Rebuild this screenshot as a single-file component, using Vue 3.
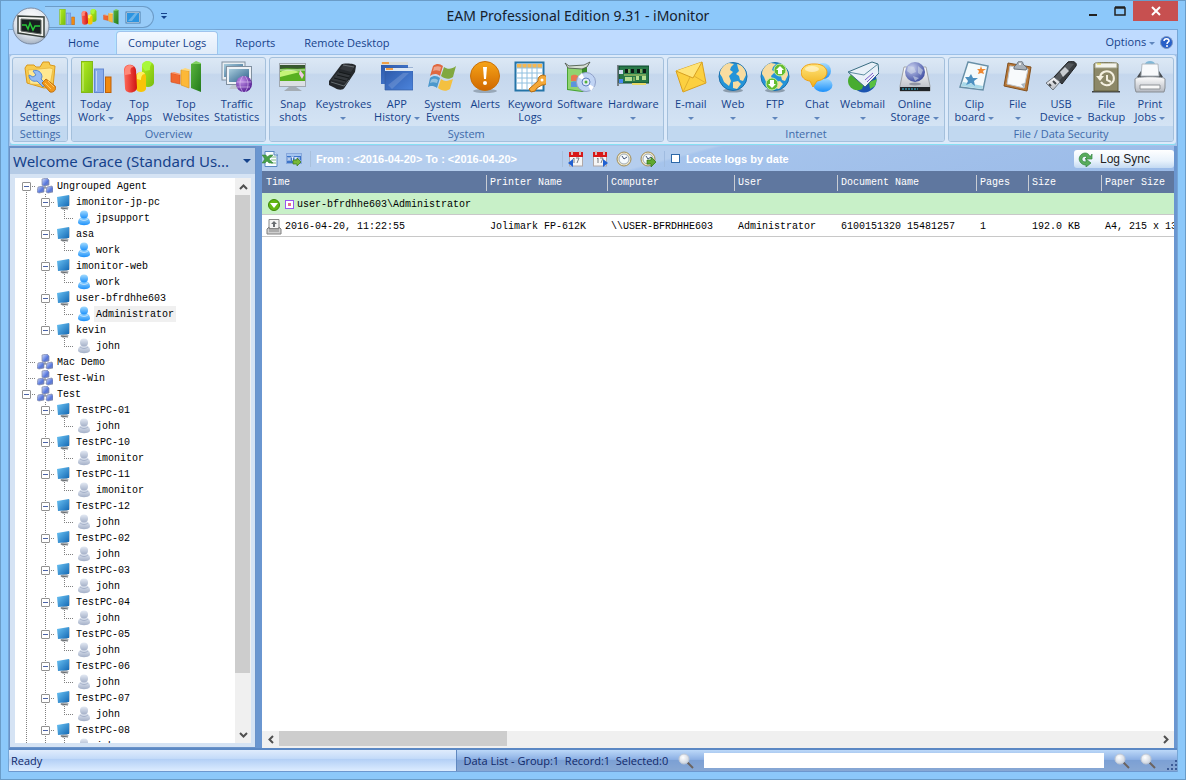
<template>
  <div class="window">
    <svg class="defs" aria-hidden="true">
      <defs>
        <linearGradient id="gGreen" x1="0" y1="0" x2="1" y2="1"><stop offset="0" stop-color="#b4ee1e" /><stop offset="1" stop-color="#78bc10" /></linearGradient>
        <linearGradient id="gLeaf" x1="0" y1="0" x2="1" y2="1"><stop offset="0" stop-color="#58b43c" /><stop offset="1" stop-color="#237a1c" /></linearGradient>
        <linearGradient id="gRed" x1="0" y1="0" x2="1" y2="0"><stop offset="0" stop-color="#ff6a5a" /><stop offset="1" stop-color="#d01212" /></linearGradient>
        <linearGradient id="gBlue" x1="0" y1="0" x2="1" y2="1"><stop offset="0" stop-color="#6cc4f4" /><stop offset="1" stop-color="#1468b4" /></linearGradient>
        <linearGradient id="gNavy" x1="0" y1="0" x2="1" y2="1"><stop offset="0" stop-color="#2c58a8" /><stop offset="1" stop-color="#4c84dc" /></linearGradient>
        <linearGradient id="gYellow" x1="0" y1="0" x2="0" y2="1"><stop offset="0" stop-color="#ffe680" /><stop offset="1" stop-color="#f0b018" /></linearGradient>
        <linearGradient id="gOrange" x1="0" y1="0" x2="0" y2="1"><stop offset="0" stop-color="#f6a418" /><stop offset="1" stop-color="#d06800" /></linearGradient>
        <linearGradient id="gSilver" x1="0" y1="0" x2="0" y2="1"><stop offset="0" stop-color="#ffffff" /><stop offset="1" stop-color="#b4b8c0" /></linearGradient>
        <linearGradient id="gScreen" x1="0" y1="0" x2="1" y2="1"><stop offset="0" stop-color="#a8ccdc" /><stop offset="1" stop-color="#285c88" /></linearGradient>
        <linearGradient id="gUser" x1="0" y1="0" x2="0" y2="1"><stop offset="0" stop-color="#a4dcff" /><stop offset="1" stop-color="#1c90fa" /></linearGradient>
        <linearGradient id="gUserOff" x1="0" y1="0" x2="0" y2="1"><stop offset="0" stop-color="#e4eaf4" /><stop offset="1" stop-color="#a4b0c8" /></linearGradient>
        <linearGradient id="gCube" x1="0" y1="0" x2="1" y2="1"><stop offset="0" stop-color="#dce4ff" /><stop offset=".6" stop-color="#5878dc" /><stop offset="1" stop-color="#7c88b8" /></linearGradient>
        <radialGradient id="gPurple" cx=".35" cy=".3" r=".8"><stop offset="0" stop-color="#c090e8" /><stop offset="1" stop-color="#4c148c" /></radialGradient>
        <radialGradient id="gGlobe" cx=".35" cy=".3" r=".8"><stop offset="0" stop-color="#c8d0f0" /><stop offset="1" stop-color="#34449c" /></radialGradient>
        <radialGradient id="gOrb" cx=".5" cy=".3" r=".8"><stop offset="0" stop-color="#ffffff" /><stop offset=".6" stop-color="#dce2ea" /><stop offset="1" stop-color="#8c9cb0" /></radialGradient>
        <radialGradient id="gLens" cx=".4" cy=".35" r=".7"><stop offset="0" stop-color="#ffffff" /><stop offset="1" stop-color="#c8d0dc" /></radialGradient>
      </defs>

      <symbol id="agent" viewBox="0 0 32 32">
        <path d="M1 7l2-3h7l2 2h4l3-5h6l1 3 5 1-2 21-9 1L3 22z" fill="#f8cc50" stroke="#d8981c" />
        <path d="M4 9l22-2 3 1-3 16-20-1z" fill="#ffe890" stroke="#e4b038" stroke-width=".7" />
        <path d="M9 10c4-2 9 1 9 6l-1 2 5 5-3 3-6-6c-4 1-8-1-8-6l4 2 3-2z" fill="#94bcf4" stroke="#5888d0" />
        <path d="M18 22l4-4 9 7c2 3-1 7-5 6z" fill="#f0981c" stroke="#c07010" />
        <path d="M21 22l6 6M24 20l6 6" stroke="#ffc860" fill="none" />
      </symbol>
      <symbol id="bars" viewBox="0 0 32 32">
        <rect x="1.500" y=".5" width="11" height="31" fill="url(#gGreen)" stroke="#84b818" />
        <rect x="14.500" y="8" width="9" height="23.500" fill="#88acec" stroke="#6488d0" />
        <rect x="25.500" y="16" width="5.500" height="15.500" fill="#f08a10" stroke="#c06008" />
        <path d="M3 2v28M16.500 10v20" stroke="#ffffff" stroke-opacity=".5" />
      </symbol>
      <symbol id="apps" viewBox="0 0 32 32">
        <path d="M19 5c0-6 11-6 12 0v17c-1 5-10 5-12 1z" fill="url(#gGreen)" />
        <path d="M19 5c0-5 6-6 9-4 2 2-2 3-1 8l-5 1z" fill="#a8f83c" />
        <path d="M13 15c0-5 9-5 10 0v13c-1 4-9 4-10 0z" fill="#f8c408" /><path d="M14 14c1-4 7-4 8-1-3 0-4 3-4 6l-4-1z" fill="#fff060" />
        <path d="M1 9c0-7 11-7 12 0l1 18c-1 6-12 6-12 0z" fill="url(#gRed)" /><path d="M2 8c1-5 7-5 9-2-4 0-4 3-3 7l-6 1z" fill="#ff8878" />
      </symbol>
      <symbol id="sites" viewBox="0 0 32 32">
        <path d="M1 12l9 2v9L1 21z" fill="#f06830" stroke="#d85020" stroke-width=".7" /><path d="M1 12l3-1 7 2-1 1z" fill="#ff9868" />
        <path d="M11 9l8 1v17l-8-3z" fill="#fcb838" stroke="#e09820" stroke-width=".7" /><path d="M11 9l4-2 6 2-2 1z" fill="#ffd878" />
        <path d="M21 3l10-1v29l-10-4z" fill="url(#gLeaf)" /><path d="M21 3l5-3 5 2v1z" fill="#80d060" />
      </symbol>
      <symbol id="traffic" viewBox="0 0 32 32">
        <rect x="1" y="1" width="23" height="18" fill="#e8eef2" stroke="#8090a0" /><rect x="3" y="3" width="19" height="13" fill="url(#gScreen)" />
        <path d="M8 28h14l-2-4h-9z" fill="#c0c8d0" />
        <rect x="5.500" y="5.500" width="25" height="18" fill="#eef2f6" stroke="#8090a0" /><rect x="8" y="8" width="20" height="13" fill="url(#gScreen)" />
        <circle cx="23" cy="23" r="8" fill="url(#gPurple)" />
        <path d="M16 21h14M16 26h13M22 15c-4 5-4 11 0 16M24 15c4 5 4 11 0 16" stroke="#e0c8f4" stroke-opacity=".6" fill="none" />
      </symbol>
      <symbol id="snap" viewBox="0 0 32 32">
        <path d="M7 30l5-4h7l6 4z" fill="#a4acb4" /><rect x="2.500" y="2.500" width="26" height="23" fill="#dce0e4" stroke="#a0a8b0" />
        <path d="M3 4h25v5H3z" fill="#385830" /><path d="M3 8c8-2 15 1 25-1v13H3z" fill="#58b020" /><path d="M3 11c8-4 13-2 20 0L3 16z" fill="#c4f478" />
        <path d="M3 8h25v2H3z" fill="#d8e8d0" fill-opacity=".5" /><path d="M23 9l4 5-2 4-3-5z" fill="#f0c8e0" />
      </symbol>
      <symbol id="keys" viewBox="0 0 32 32">
        <path d="M2 20L14 4c1-2 14-2 15 1l-1 6-10 15c-2 4-7 3-10 1l-6-3z" fill="#24282c" />
        <path d="M13 8l4-5 11 2-4 6zM4 19l7-8 12 3-5 8z" fill="#34383c" />
        <path d="M7 17l12 3M10 14l12 3M12 11l12 3" stroke="#14181a" fill="none" /><path d="M4 21l13 4 5-6" stroke="#646c70" fill="none" /><path d="M16 4l11 2" stroke="#686e72" fill="none" />
      </symbol>
      <symbol id="windows" viewBox="0 0 32 32">
        <path d="M0 2h27v21H0z" fill="url(#gNavy)" /><path d="M0 1h27v3H0z" fill="#d8dcd8" /><path d="M1 1h7v2H1z" fill="#f0a048" />
        <path d="M4 7h28v22H4z" fill="url(#gNavy)" stroke="#345ca0" stroke-width=".7" /><path d="M4 7h28v3H4z" fill="#dce8f4" /><path d="M5 7h7v2H5z" fill="#f0a048" />
        <path d="M7 24L22 12h6L11 28z" fill="#ffffff" fill-opacity=".15" />
      </symbol>
      <symbol id="flag" viewBox="0 0 32 32">
        <path d="M6 5c4-3 7-2 10 0l-3 10c-4-3-7-2-10 0z" fill="#e06840" /><path d="M17 6c4 3 8 2 12-1l-3 11c-4 3-8 2-12-1z" fill="#80a840" />
        <path d="M3 17c4-3 7-2 10 0l-3 10c-4-3-7-2-9-1z" fill="#4c98cc" /><path d="M14 18c4 3 7 2 12 0l-3 10c-4 3-8 2-12-1z" fill="#f4c040" />
        <path d="M7 6c3-1 5-1 7 0l-1 4c-3-1-5-1-7 0zM4 19c3-2 5-1 7 0l-1 3c-3-1-5-1-7 0z" fill="#ffffff" fill-opacity=".4" />
      </symbol>
      <symbol id="alert" viewBox="0 0 32 32">
        <ellipse cx="16" cy="30" rx="12" ry="2" fill="#98a8b8" /><circle cx="16" cy="15" r="14.500" fill="url(#gOrange)" stroke="#c87008" />
        <path d="M14 6h4l-1 12h-2z" fill="#fff" /><circle cx="16" cy="22" r="2" fill="#fff" />
      </symbol>
      <symbol id="keyword" viewBox="0 0 32 32">
        <rect x="1.500" y="1.500" width="28" height="28" fill="#fff" stroke="#2474a8" stroke-width="2" /><path d="M3 3h25v4H3z" fill="#f8b850" />
        <path d="M8 3v25M13 3v25M18 3v25M23 3v25M3 7h25M3 12h25M3 17h25M3 22h25" stroke="#90c0e0" fill="none" />
        <path d="M17 31l-2-3 9-8a5 5 0 1 1 4 4l-5 3-2 3z" fill="#f4a838" stroke="#b86c10" /><circle cx="28" cy="19" r="1.500" fill="#fff" />
      </symbol>
      <symbol id="software" viewBox="0 0 32 32">
        <path d="M3 5l20-1-1 26-4 1-15-2z" fill="#48a434" /><path d="M4 7l14 1v22L4 28z" fill="#90d470" /><path d="M18 8l5-4v24l-5 3z" fill="#388c28" />
        <path d="M1 2l4 3 15-1 6-3-3 5-5 2L4 7z" fill="#d8e0d4" stroke="#485048" stroke-width=".8" />
        <path d="M7 15c3-2 5-1 7 0v5H7z" fill="#e87850" /><path d="M7 21c3-1 4-1 6 0v5H7z" fill="#5c94dc" /><circle cx="22" cy="21" r="9.500" fill="#c0d4f4" stroke="#90a0c8" />
        <path d="M22 21l-8-5 4-4zM22 21l8 5-3 4z" fill="#fff" /><circle cx="22" cy="21" r="4" fill="#e0e8f8" stroke="#6080c0" /><circle cx="22" cy="21" r="1.500" fill="#50b038" />
      </symbol>
      <symbol id="hardware" viewBox="0 0 32 32">
        <path d="M1 4v21" stroke="#788088" stroke-width="2" /><path d="M2 5h30v17H2z" fill="#287848" stroke="#0c4830" /><path d="M15 22h14v2H15z" fill="#e8d868" />
        <path d="M8 8h3v4H8zM14 8h3v4h-3zM20 8h3v4h-3zM26 8h3v4h-3z" fill="#0c1814" /><path d="M8 16h7v4H8zM19 15h3v4h-3zM25 15h4v4h-4z" fill="#b4dc90" />
        <path d="M7 14h22M12 8v4M24 8v4M17 16v4" stroke="#c8d870" fill="none" /><path d="M2 9h4v4H2z" fill="#d0dcf0" /><path d="M2 18h4v4H2z" fill="#4888f0" />
      </symbol>
      <symbol id="mail" viewBox="0 0 32 32">
        <path d="M1 10L27 1l4 21L8 31z" fill="#fcd040" stroke="#d8a020" /><path d="M1 10l17 7L27 1" fill="#ffe478" stroke="#d8a020" /><path d="M8 31l7-15M31 22L19 15" stroke="#e0b030" fill="none" />
      </symbol>
      <symbol id="globe" viewBox="0 0 32 32">
        <ellipse cx="16" cy="29.500" rx="10" ry="2" fill="#8c9cac" /><circle cx="16" cy="15.500" r="14" fill="#2494d8" stroke="#1c70ac" />
        <path d="M3 13c0-6 5-10 9-11l5 1-3 3-1 3 3 2-4 4 2 5-2 5-5-4-2-5zM20 3c5 1 9 5 9 11l-3 6-3-1-1-4-3-2 3-3-1-3zM16 21l5-1 3 3-4 5-4-1z" fill="#f8dca0" />
      </symbol>
      <symbol id="ftp" viewBox="0 0 32 32">
        <use href="#globe" /><circle cx="21" cy="9" r="6" fill="#64bc30" stroke="#c8f0a0" /><path d="M21 5l4 4h-2v4h-4V9h-2z" fill="#fff" />
        <circle cx="13" cy="23" r="6" fill="#64bc30" stroke="#c8f0a0" /><path d="M13 27l-4-4h2v-4h4v4h2z" fill="#fff" />
      </symbol>
      <symbol id="chat" viewBox="0 0 32 32">
        <ellipse cx="22" cy="24" rx="9.500" ry="7" fill="url(#gUser)" /><circle cx="22" cy="10" r="8" fill="url(#gUser)" />
        <path d="M14 3c-18-1-17 16-5 17l3 6 4-6c14-2 13-17-2-17z" fill="url(#gYellow)" stroke="#f0a010" /><ellipse cx="11" cy="8" rx="7" ry="3" fill="#fff" fill-opacity=".5" />
      </symbol>
      <symbol id="webmail" viewBox="0 0 32 32">
        <circle cx="17" cy="19" r="12.500" fill="#1c54b0" /><path d="M1 20c0-6 6-9 11-8l6 8-3 8C8 32 1 26 1 20z" fill="#48ac30" /><path d="M22 21l8-3-2 7-5 3z" fill="#58c040" />
        <path d="M1 11L25 1l6 2 1 9-14 14z" fill="#e8f0f8" stroke="#386c80" /><path d="M1 11l16 3L31 3" fill="none" stroke="#5c8ca0" /><path d="M18 19l8-7M20 21l7-7" stroke="#7858c8" />
      </symbol>
      <symbol id="storage" viewBox="0 0 32 32">
        <path d="M5 6h22l4 19v5H1v-5z" fill="url(#gSilver)" stroke="#a0a4a8" /><path d="M1 26h30v4H1z" fill="#202428" /><path d="M3 28h16" stroke="#34c0e0" stroke-dasharray="2 1" />
        <circle cx="16" cy="11" r="10" fill="url(#gGlobe)" /><path d="M9 5l6 1 2 5-5 2-4-3zM19 5l5 4-2 5-3-2zM14 15l6 2-4 3z" fill="#d0d8e8" fill-opacity=".6" /><ellipse cx="16" cy="23" rx="6" ry="1.500" fill="#9094a4" />
      </symbol>
      <symbol id="clip" viewBox="0 0 32 32">
        <path d="M10 1l20 4-5 24-23-3z" fill="#f4fafc" stroke="#6890a8" stroke-width="1.500" /><path d="M3 25l21 3 1-3-20-4z" fill="#a8d8e8" />
        <path d="M13 13l2 4 5 0-4 3 1 5-4-3-5 2 2-4-3-4h4z" fill="#4c90c0" /><path d="M23 5l1 3 4 0-3 2 1 3-3-1-3 1 1-3-2-2h3z" fill="#f08830" />
      </symbol>
      <symbol id="board" viewBox="0 0 32 32">
        <path d="M6 2l23 4-4 24L2 25z" fill="#b87838" stroke="#805020" /><path d="M8 5l18 3-4 19-17-4z" fill="#f8fafc" stroke="#c0c8d0" /><path d="M22 27l-3-4 4-1z" fill="#a8b4c0" />
        <path d="M12 6l3-3c1-4 6-4 6 0l4 4-1 2-12-1z" fill="#a8b0b8" stroke="#68727c" /><circle cx="18" cy="3" r="1" fill="#fff" />
      </symbol>
      <symbol id="usb" viewBox="0 0 32 32">
        <path d="M9 16L23 1c3-2 10 0 8 4L17 23z" fill="#383c40" stroke="#202224" /><path d="M10 16L23 2l6 1-15 17z" fill="#54585c" /><path d="M15 11l5-5 4 4-6 6z" fill="#c8ccd0" />
        <path d="M1 22l8-6 6 5-7 8z" fill="url(#gSilver)" stroke="#707880" /><path d="M4 23l2 2M8 20l3 3" stroke="#404448" stroke-width="2" />
      </symbol>
      <symbol id="backup" viewBox="0 0 32 32">
        <path d="M2 30h28v1.500H2z" fill="#404448" /><path d="M4 3c0-2 24-2 24 0v27H4z" fill="#8c8868" stroke="#64603c" /><path d="M5 2h22v5H5z" fill="#f4f4ec" stroke="#a0a088" /><path d="M7 3h4" stroke="#e0d030" />
        <path d="M11 21a7 7 0 1 0-1-5" fill="none" stroke="#f4f0e0" stroke-width="2" /><path d="M17 14v5l4 2" fill="none" stroke="#f4f0e0" stroke-width="2" /><path d="M6 15h8l-4 5z" fill="#f4f0e0" />
      </symbol>
      <symbol id="print" viewBox="0 0 32 32">
        <ellipse cx="16" cy="3" rx="5" ry="3" fill="#80b8d8" /><path d="M3 16l4-6h18l4 6z" fill="#484c50" /><path d="M8 3h16l1 12H7z" fill="#f8fafc" stroke="#b0b8c0" />
        <path d="M1 18c0-3 30-3 30 0v9l-1 4H2l-1-4z" fill="url(#gSilver)" stroke="#888e94" /><path d="M6 24h20v4H6z" fill="#f8f8f8" stroke="#909498" />
      </symbol>

      <symbol id="minidesk" viewBox="0 0 16 16">
        <rect x="1" y="3" width="14" height="11" fill="#e8f4ff" stroke="#4c7ca8" /><rect x="2" y="4" width="12" height="9" fill="#2c94e0" /><path d="M3 12l7-8h3l-6 8z" fill="#fff" fill-opacity=".3" />
      </symbol>
      <symbol id="network" viewBox="0 0 16 16">
        <path d="M8 6v4M4 10h8" stroke="#707888" /><path d="M5 1l5-1 2 2v5l-5 1-2-1z" fill="url(#gCube)" stroke="#8088a8" stroke-width=".7" />
        <path d="M1 9l5-1 1 2v4l-5 1-2-1z" fill="url(#gCube)" stroke="#8088a8" stroke-width=".7" /><path d="M10 9l5-1 1 2v4l-5 1-2-1z" fill="url(#gCube)" stroke="#8088a8" stroke-width=".7" />
      </symbol>
      <symbol id="pc" viewBox="0 0 16 16">
        <path d="M7 12h4l2 2-6 2-3-2z" fill="#b0b4b8" /><path d="M5 14l7 1" stroke="#686c70" /><path d="M13 1l1 1v9l-1 1z" fill="#c4ccd4" /><path d="M1 3l12-2v11L2 13z" fill="url(#gBlue)" />
      </symbol>
      <symbol id="user" viewBox="0 0 16 16">
        <path d="M2 13c0-5 3-6 6-6s6 1 6 6c-2 3-10 3-12 0z" fill="url(#gUser)" /><circle cx="8" cy="4.500" r="4" fill="url(#gUser)" /><path d="M4 9c3 2 5 2 8 0" stroke="#fff" stroke-opacity=".5" fill="none" />
      </symbol>
      <symbol id="useroff" viewBox="0 0 16 16">
        <path d="M2 13c0-5 3-6 6-6s6 1 6 6c-2 3-10 3-12 0z" fill="url(#gUserOff)" /><circle cx="8" cy="4.500" r="4" fill="url(#gUserOff)" /><path d="M4 9c3 2 5 2 8 0" stroke="#8494b4" stroke-opacity=".5" fill="none" />
      </symbol>
      <symbol id="excel" viewBox="0 0 16 16">
        <path d="M3 .5h9l3 3v12H3z" fill="#f8fcff" stroke="#5888c0" /><path d="M12 0v4h4" fill="#c8dcf0" stroke="#5888c0" /><path d="M9 6h5M9 9h5M9 12h5" stroke="#80b880" />
        <path d="M0 4h4l1 2 3-2h3L7 8l4 4H7L5 10l-2 2H0l3-4z" fill="#48a048" stroke="#2c7c34" stroke-width=".5" />
      </symbol>
      <symbol id="html" viewBox="0 0 16 16">
        <rect x=".5" y="2.500" width="15" height="10" fill="#3c74c8" stroke="#88a8dc" /><path d="M1 3h14v2H1z" fill="#a4c4f0" /><path d="M2 6v4M4 6v4M2 8h2M5 6h3M6.500 6v4M9 10V6l1 2 1-2v4M13 6v4h2" stroke="#fff" stroke-width=".8" fill="none" />
        <path d="M7 9h4V7l4 4-4 4v-2H7z" fill="#78b838" stroke="#387818" stroke-width=".7" />
      </symbol>
      <symbol id="cal" viewBox="0 0 16 16">
        <rect x="1.500" y="2" width="13" height="13" fill="#f6f6f6" stroke="#b0a8a8" /><path d="M1 1h14v5H1z" fill="#d81818" /><path d="M4 0v4M12 0v4" stroke="#fff" stroke-width="2" /><path d="M4 0v4M12 0v4" stroke="#883030" stroke-width=".7" />
        <path d="M5 8l1-1v5M8 7h3l-2 5" stroke="#787c84" fill="none" />
      </symbol>
      <symbol id="calprev" viewBox="0 0 16 16"><use href="#cal" /><path d="M0 12l5-4v8z" fill="#2060d0" /></symbol>
      <symbol id="calnext" viewBox="0 0 16 16"><use href="#cal" /><path d="M16 12l-5-4v8z" fill="#2060d0" /></symbol>
      <symbol id="clock" viewBox="0 0 16 16">
        <circle cx="8" cy="8" r="7" fill="#f0e8cc" stroke="#a08c58" /><circle cx="8" cy="8" r="5" fill="#f6fafc" stroke="#8898a8" stroke-width=".8" /><path d="M6 5l2 3 3-2" stroke="#405070" fill="none" />
      </symbol>
      <symbol id="clockgo" viewBox="0 0 16 16"><use href="#clock" /><path d="M7 9h4V6l5 5-5 5v-3H7z" fill="#60a830" stroke="#2c7014" stroke-width=".7" /></symbol>
      <symbol id="sync" viewBox="0 0 16 16">
        <path d="M13 6C12 2 8 1 5 3S1 9 4 12c2 2 4 2 5 2v2l5-4-5-4v3c-4 0-5-3-3-5 1-1 3-1 4 0L8 8h7V3z" fill="#58ac5c" stroke="#308440" stroke-width=".7" />
      </symbol>
      <symbol id="expand" viewBox="0 0 16 16"><circle cx="8" cy="8" r="5.500" fill="#64b810" stroke="#3c8808" /><path d="M4 6h8l-4 5z" fill="#fff" /></symbol>
      <symbol id="printer" viewBox="0 0 16 16">
        <path d="M3 .5h10v9H3z" fill="#f4f4f4" stroke="#888" /><path d="M8 2l3 3H9v3H7V5H5z" fill="#686c70" /><path d="M1 10l2-2v2h10V8l2 2v5H1z" fill="#d0d0d0" stroke="#808080" /><path d="M3 12h10" stroke="#888" />
      </symbol>
      <symbol id="lens" viewBox="0 0 16 16"><path d="M9 9l6 6" stroke="#6c6460" stroke-width="2" /><circle cx="6" cy="6" r="5" fill="url(#gLens)" stroke="#c0c8d4" /></symbol>
    </svg>

    <header class="titlebar">
      <div class="quick">
        <div class="quick-tray">
          <button v-for="q in quick" :key="q.icon" :aria-label="q.name"><svg class="small"><use :href="'#' + q.icon" /></svg></button>
        </div>
        <button class="quick-more" aria-label="Customize">
          <svg width="8" height="9" viewBox="0 0 8 9"><path d="M1 1.500h6" stroke="#15428b" /><path d="M1 4h6L4 7z" fill="#15428b" /></svg>
        </button>
      </div>
      <h1>EAM Professional Edition 9.31 - iMonitor</h1>
      <div class="controls">
        <button aria-label="Minimize"><svg width="12" height="12" viewBox="0 0 12 12"><path d="M2 9h8v2H2z" fill="#222" /></svg></button>
        <button aria-label="Maximize"><svg width="12" height="12" viewBox="0 0 12 12"><path d="M1 3h10v7H1zM1 2h10" fill="none" stroke="#222" stroke-width="1.500" /></svg></button>
        <button class="close" aria-label="Close"><svg width="10" height="10" viewBox="0 0 10 10"><path d="M1 1l8 8M9 1L1 9" stroke="#fff" stroke-width="2" /></svg></button>
      </div>
    </header>
    <button class="orb" aria-label="Application menu">
      <svg viewBox="0 0 38 38">
        <circle cx="19" cy="19" r="18" fill="url(#gOrb)" stroke="#7c8ca4" />
        <path d="M6 9l26 1v20L6 26z" fill="#f4f4f0" stroke="#38403c" stroke-width="1.500" /><path d="M9 12l20 1v14L9 24z" fill="#182020" stroke="#606864" />
        <path d="M10 18h4l2 4 2-6 3 7 2-4h5" fill="none" stroke="#28c838" stroke-width="1.500" />
      </svg>
    </button>

    <div class="frame">
      <nav class="tabs">
        <a v-for="t in tabs" :key="t" href="#" :class="{ active: t === 'Computer Logs' }">{{ t }}</a>
        <button class="options">Options <i class="arrow"></i></button>
        <button class="help" aria-label="Help">
          <svg width="13" height="13" viewBox="0 0 13 13"><circle cx="6.500" cy="6.500" r="6" fill="#2860c8" stroke="#8098c0" /><path d="M4 5c0-3 5-3 5 0 0 1-2 1-2 3M7 9v2" stroke="#fff" stroke-width="1.500" fill="none" /></svg>
        </button>
      </nav>

      <div class="ribbon">
        <section v-for="g in groups" :key="g.name" class="group" :style="{ flexGrow: g.size }">
          <div class="group-items">
            <button v-for="b in g.items" :key="b.icon" class="tool" :style="{ flexGrow: b.size }">
              <svg class="large"><use :href="'#' + b.icon" /></svg>
              <span>{{ b.top }}</span>
              <span>{{ b.bottom }} <i v-if="b.menu" class="arrow"></i></span>
            </button>
          </div>
          <h2>{{ g.name }}</h2>
        </section>
      </div>

      <main class="work">
        <aside class="side">
          <button class="welcome"><span>Welcome Grace (Standard Us...</span><i class="arrow dark"></i></button>
          <div class="tree-box">
            <ul class="tree">
              <li v-for="(n, i) in nodes" :key="i">
                <span v-for="(c, j) in n.cells" :key="j" class="cell" :class="c">
                  <button v-if="j === n.cells.length - 1 && n.toggle" class="toggle" aria-label="Collapse"></button>
                </span>
                <svg class="small" :class="{ leaf: n.level === 2 }"><use :href="'#' + n.icon" /></svg>
                <span class="label" :class="{ selected: n.text === 'Administrator' }">{{ n.text }}</span>
              </li>
            </ul>
            <div class="vbar">
              <button aria-label="Scroll up"><svg width="9" height="6" viewBox="0 0 9 6"><path d="M1 5l3.500-3.500L8 5" /></svg></button>
              <div class="vtrack"><div class="vthumb"></div></div>
              <button aria-label="Scroll down"><svg width="9" height="6" viewBox="0 0 9 6"><path d="M1 1l3.500 3.500L8 1" /></svg></button>
            </div>
          </div>
        </aside>

        <section class="logs">
          <div class="toolbar">
            <button aria-label="Export to Excel"><svg class="small"><use href="#excel" /></svg></button>
            <button aria-label="Export to HTML"><svg class="small"><use href="#html" /></svg></button>
            <b class="range">From : &lt;2016-04-20&gt; To : &lt;2016-04-20&gt;</b>
            <button v-for="d in dateTools" :key="d.icon" :aria-label="d.name"><svg class="small"><use :href="'#' + d.icon" /></svg></button>
            <label class="locate"><input type="checkbox"> Locate logs by date</label>
            <button class="sync"><svg class="small"><use href="#sync" /></svg>Log Sync</button>
          </div>
          <div class="grid">
            <table>
              <colgroup><col v-for="c in columns" :key="c.name" :style="{ width: c.width + 'px' }"></colgroup>
              <thead>
                <tr><th v-for="c in columns" :key="c.name"><span>{{ c.name }}</span></th></tr>
              </thead>
              <tbody>
                <tr class="host">
                  <td :colspan="columns.length">
                    <div class="with-icon">
                      <svg class="small"><use href="#expand" /></svg>
                      <svg width="9" height="9" viewBox="0 0 9 9"><rect x=".5" y=".5" width="8" height="8" fill="#fff" stroke="#9858f0" /><rect x="3" y="3" width="3" height="3" fill="#e87090" /></svg>
                      user-bfrdhhe603\Administrator
                    </div>
                  </td>
                </tr>
                <tr v-for="r in rows" :key="r[0]">
                  <td v-for="(v, i) in r" :key="i">
                    <div v-if="i === 0" class="with-icon"><svg class="small"><use href="#printer" /></svg>{{ v }}</div>
                    <template v-else>{{ v }}</template>
                  </td>
                </tr>
              </tbody>
            </table>
          </div>
          <div class="hbar">
            <button aria-label="Scroll left"><svg width="6" height="9" viewBox="0 0 6 9"><path d="M5 1L1.500 4.500 5 8" /></svg></button>
            <div class="htrack"><div class="hthumb"></div></div>
            <button aria-label="Scroll right"><svg width="6" height="9" viewBox="0 0 6 9"><path d="M1 1l3.500 3.500L1 8" /></svg></button>
          </div>
        </section>
      </main>

      <footer class="status">
        <div class="ready">Ready</div>
        <div class="summary">
          <label for="find">Data List - Group:1&nbsp; Record:1&nbsp; Selected:0</label>
          <svg class="small"><use href="#lens" /></svg>
          <input id="find" type="text">
          <button aria-label="Find previous"><svg class="small"><use href="#lens" /></svg></button>
          <button aria-label="Find next"><svg class="small"><use href="#lens" /></svg></button>
          <svg class="grip" viewBox="0 0 11 11"><path d="M9 0h2v2H9zM5 4h2v2H5zM9 4h2v2H9zM1 8h2v2H1zM5 8h2v2H5zM9 8h2v2H9z" fill="#3c5c98" /></svg>
        </div>
      </footer>
    </div>
  </div>
</template>

<script setup>
const quick = [
  { icon: 'bars', name: 'Today Work' },
  { icon: 'apps', name: 'Top Apps' },
  { icon: 'sites', name: 'Top Websites' },
  { icon: 'minidesk', name: 'Remote Desktop' }
]

const tabs = ['Home', 'Computer Logs', 'Reports', 'Remote Desktop']

const tool = (icon, top, bottom, size, menu = false) => ({ icon, top, bottom, size, menu })

const groups = [
  { name: 'Settings', size: 55, items: [tool('agent', 'Agent', 'Settings', 50)] },
  {
    name: 'Overview',
    size: 194,
    items: [
      tool('bars', 'Today', 'Work', 43, true),
      tool('apps', 'Top', 'Apps', 44),
      tool('sites', 'Top', 'Websites', 50),
      tool('traffic', 'Traffic', 'Statistics', 52)
    ]
  },
  {
    name: 'System',
    size: 397,
    items: [
      tool('snap', 'Snap', 'shots', 43),
      tool('keys', 'Keystrokes', '', 58, true),
      tool('windows', 'APP', 'History', 49, true),
      tool('flag', 'System', 'Events', 43),
      tool('alert', 'Alerts', '', 42),
      tool('keyword', 'Keyword', 'Logs', 48),
      tool('software', 'Software', '', 52, true),
      tool('hardware', 'Hardware', '', 55, true)
    ]
  },
  {
    name: 'Internet',
    size: 279,
    items: [
      tool('mail', 'E-mail', '', 42, true),
      tool('globe', 'Web', '', 42, true),
      tool('ftp', 'FTP', '', 42, true),
      tool('chat', 'Chat', '', 42, true),
      tool('webmail', 'Webmail', '', 49, true),
      tool('storage', 'Online', 'Storage', 55, true)
    ]
  },
  {
    name: 'File / Data Security',
    size: 226,
    items: [
      tool('clip', 'Clip', 'board', 46, true),
      tool('board', 'File', '', 40, true),
      tool('usb', 'USB', 'Device', 46, true),
      tool('backup', 'File', 'Backup', 44),
      tool('print', 'Print', 'Jobs', 42, true)
    ]
  }
]

const agents = [
  {
    name: 'Ungrouped Agent',
    pcs: [
      ['imonitor-jp-pc', 'jpsupport', true],
      ['asa', 'work', true],
      ['imonitor-web', 'work', true],
      ['user-bfrdhhe603', 'Administrator', true],
      ['kevin', 'john']
    ]
  },
  { name: 'Mac Demo', pcs: [] },
  { name: 'Test-Win', pcs: [] },
  {
    name: 'Test',
    pcs: [
      ['TestPC-01', 'john'],
      ['TestPC-10', 'imonitor'],
      ['TestPC-11', 'imonitor'],
      ['TestPC-12', 'john'],
      ['TestPC-02', 'john'],
      ['TestPC-03', 'john'],
      ['TestPC-04', 'john'],
      ['TestPC-05', 'john'],
      ['TestPC-06', 'john'],
      ['TestPC-07', 'john'],
      ['TestPC-08', 'john']
    ]
  }
]

// Flatten the tree into rows, each with the guide cells drawn before its icon
const nodes = agents.flatMap((a, ai) => [
  { level: 0, icon: 'network', text: a.name, toggle: a.pcs.length > 0, cells: [ai === 0 ? 'first' : 'cross'] },
  ...a.pcs.flatMap(([pc, user, online], i) => {
    const last = ai === 0 && i === a.pcs.length - 1
    return [
      { level: 1, icon: 'pc', text: pc, toggle: true, cells: ['down', last ? 'end' : 'cross'] },
      { level: 2, icon: online ? 'user' : 'useroff', text: user, cells: ['down', last ? 'blank' : 'down', 'end'] }
    ]
  })
])

const dateTools = [
  { icon: 'calprev', name: 'Previous day' },
  { icon: 'calnext', name: 'Next day' },
  { icon: 'clock', name: 'Choose time' },
  { icon: 'clockgo', name: 'Go to time' }
]

const columns = [
  { name: 'Time', width: 224 },
  { name: 'Printer Name', width: 121 },
  { name: 'Computer', width: 127 },
  { name: 'User', width: 103 },
  { name: 'Document Name', width: 139 },
  { name: 'Pages', width: 52 },
  { name: 'Size', width: 73 },
  { name: 'Paper Size', width: 160 }
]

const rows = [
  ['2016-04-20, 11:22:55', 'Jolimark FP-612K', '\\\\USER-BFRDHHE603', 'Administrator', '6100151320 15481257', '1', '192.0 KB', 'A4, 215 x 137 mm']
]
</script>

<style>
body {
  margin: 0;
}
</style>

<style scoped>
.window {
  position: relative;
  box-sizing: border-box;
  display: flex;
  flex-direction: column;
  height: 100vh;
  padding: 0 7px 7px;
  border: 1px solid #6a9cc8;
  background: #8cc8fa;
  color: #15428b;
  font: 11px/16px "Open Sans", "Noto Sans", sans-serif;
  overflow: hidden;
}

.defs {
  position: absolute;
  width: 0;
  height: 0;
}

button {
  padding: 0;
  border: 0;
  background: none;
  color: inherit;
  font: inherit;
}

svg {
  display: block;
  flex: none;
}

.small {
  width: 16px;
  height: 16px;
}

.large {
  width: 32px;
  height: 32px;
}

.arrow {
  display: inline-block;
  border: 3px solid transparent;
  border-top-color: #5f86bd;
  border-bottom: 0;
  vertical-align: middle;
}

.arrow.dark {
  border-width: 4px;
  border-bottom: 0;
  border-top-color: #15428b;
}

/* Title bar */
.titlebar {
  display: grid;
  grid-template-columns: 1fr auto 1fr;
  height: 28px;
}

.titlebar h1 {
  margin: 0;
  padding-right: 30px;
  color: #16202c;
  font: 400 14px/29px "Noto Sans", sans-serif;
}

.quick {
  display: flex;
  align-items: center;
  padding: 4px 0 2px 37px;
}

.quick-tray {
  display: flex;
  gap: 6px;
  padding: 2px 12px 2px 14px;
  border: 1px solid #6c9cc8;
  border-left: 0;
  border-radius: 0 11px 11px 0;
  background: #98ccf8;
}

.quick-more {
  padding-left: 6px;
}

.controls {
  display: flex;
  justify-content: flex-end;
  align-items: flex-start;
}

.controls button {
  display: grid;
  place-items: center;
  width: 27px;
  height: 20px;
}

.controls .close {
  width: 45px;
  background: #c75050;
}

.orb {
  position: absolute;
  top: 6px;
  left: 11px;
  width: 38px;
  height: 38px;
}

/* Tabs and ribbon */
.frame {
  display: flex;
  flex: 1;
  flex-direction: column;
  min-height: 0;
  border: 1px solid #76a6d6;
  border-bottom: 0;
  background: #a9c3e8;
}

.tabs {
  display: flex;
  gap: 5px;
  height: 24px;
  padding: 0 4px 0 47px;
  background: #bfdbff;
}

.tabs a {
  margin-top: 1px;
  padding: 0 11px;
  border: 1px solid transparent;
  border-bottom: 0;
  border-radius: 4px 4px 0 0;
  color: inherit;
  line-height: 22px;
  text-decoration: none;
}

.tabs .active {
  border-color: #9fc4ee;
  background: linear-gradient(#f2f8ff, #e0ebf8);
  box-shadow: 0 0 2px #9ff;
}

.options {
  margin-left: auto;
}

.ribbon {
  display: flex;
  gap: 3px;
  padding: 2px;
  border: 1px solid #9cc0e8;
  border-bottom-color: #86e0f4;
  border-radius: 4px;
  background: #dceafa;
}

.group {
  display: flex;
  flex: 1 1 0;
  flex-direction: column;
  min-width: 0;
  border: 1px solid #a4c0dc;
  border-radius: 3px;
  background: linear-gradient(#dce8f5, #d0dff0 18%, #c5d7ed 20%, #d8e7f6);
  overflow: hidden;
}

.group-items {
  display: flex;
  flex: 1;
  padding: 3px 2px;
}

.tool {
  display: flex;
  flex: 1 1 0;
  flex-direction: column;
  align-items: center;
  min-width: 0;
  line-height: 13px;
  white-space: nowrap;
}

.tool .large {
  margin-bottom: 4px;
}

.tool span {
  height: 13px;
}

.group h2 {
  margin: 0;
  background: #c1d8f0;
  color: #3e6aaa;
  font-size: 11px;
  font-weight: 400;
  line-height: 15px;
  text-align: center;
}

/* Work area */
.work {
  display: flex;
  flex: 1;
  gap: 6px;
  min-height: 0;
  margin-top: 1px;
  padding-right: 3px;
  background: #6a96d0;
  border-bottom: 2px solid #5b88c4;
}

.side {
  box-sizing: border-box;
  display: flex;
  flex: 0 0 247px;
  flex-direction: column;
  border: 1px solid #6a92c8;
  border-width: 2px 1px 1px;
  background: #d5e3f4;
}

.welcome {
  display: flex;
  align-items: center;
  justify-content: space-between;
  height: 26px;
  padding: 0 4px 0 3px;
  background: #b5cbe6;
  font: 15px/20px "Noto Sans", sans-serif;
  white-space: nowrap;
}

.tree-box {
  display: flex;
  flex: 1;
  min-height: 0;
  margin: 4px 4px 4px 5px;
  background: #fff;
  color: #000;
  font: 10px/15px "Liberation Mono", monospace;
}

.tree {
  flex: 1;
  margin: 0;
  padding: 0 0 0 2px;
  list-style: none;
  overflow: hidden;
}

.tree li {
  display: flex;
  height: 16px;
}

.cell {
  --dots-y: repeating-linear-gradient(#808080 0 1px, transparent 1px 2px);
  --dots-x: repeating-linear-gradient(90deg, #808080 0 1px, transparent 1px 2px);
  display: grid;
  place-items: center;
  width: 19px;
  background-repeat: no-repeat;
}

.down {
  background-image: var(--dots-y);
  background-position: 9px 0;
  background-size: 1px 16px;
}

.cross {
  background-image: var(--dots-y), var(--dots-x);
  background-position: 9px 0, 9px 8px;
  background-size: 1px 16px, 10px 1px;
}

.first {
  background-image: var(--dots-y), var(--dots-x);
  background-position: 9px 8px, 9px 8px;
  background-size: 1px 8px, 10px 1px;
}

.end {
  background-image: var(--dots-y), var(--dots-x);
  background-position: 9px 0, 9px 8px;
  background-size: 1px 8px, 10px 1px;
}

.toggle {
  width: 9px;
  height: 9px;
  border: 1px solid #919191;
  border-radius: 1px;
  background: linear-gradient(#4b63a7, #4b63a7) center / 5px 1px no-repeat #fff;
}

.tree .small {
  margin-left: 1px;
}

.tree .leaf {
  margin-left: 2px;
}

.label {
  margin-left: 2px;
  padding: 1px 2px 0;
}

.selected {
  background: #f0f0f0;
}

.vbar {
  display: flex;
  flex-direction: column;
  width: 16px;
  background: #f0f0f0;
}

.vbar button,
.hbar button {
  display: grid;
  place-items: center;
  width: 17px;
  height: 17px;
}

.vbar path,
.hbar path {
  fill: none;
  stroke: #505050;
  stroke-width: 2;
}

.vtrack {
  flex: 1;
}

.vthumb {
  height: 90%;
  margin-right: 1px;
  background: #cdcdcd;
}

.logs {
  display: flex;
  flex: 1;
  flex-direction: column;
  min-width: 0;
}

.toolbar {
  display: flex;
  align-items: center;
  gap: 8px;
  height: 25px;
  background: linear-gradient(165deg, #b5ceee 0 45%, #a6c4ec 46%, #9bbbe8);
  color: #fff;
  font: bold 11px/16px "Liberation Sans", Arial, sans-serif;
}

.range {
  width: 246px;
  margin-right: -3px;
  padding-left: 5px;
  border: 1px solid #a8c0dc;
  border-width: 0 1px;
}

.locate {
  display: flex;
  align-items: center;
  gap: 6px;
  padding-left: 6px;
  border-left: 1px solid #a0bce0;
}

.locate input {
  appearance: none;
  width: 9px;
  height: 9px;
  margin: 0;
  border: 1px solid #2c68a8;
  background: #fff;
}

.sync {
  display: flex;
  align-items: center;
  gap: 7px;
  width: 100px;
  height: 18px;
  margin-left: auto;
  padding-left: 3px;
  border-radius: 3px;
  background: linear-gradient(#fff, #e8f2fc 60%, #c4daf2);
  color: #222;
  font-size: 12px;
  font-weight: 400;
}

.grid {
  flex: 1;
  background: #fff;
  overflow: hidden;
}

table {
  width: 999px;
  border-collapse: collapse;
  table-layout: fixed;
  color: #000;
  font: 10px/16px "Liberation Mono", monospace;
}

th {
  height: 20px;
  padding: 2px 0 0;
  background: #5f779f;
  color: #fff;
  font-weight: 400;
  text-align: left;
}

th span {
  display: block;
  padding-left: 4px;
}

th + th span {
  padding-left: 3px;
  border-left: 1px solid #c8ccd4;
}

td {
  height: 19px;
  padding: 2px 0 0 4px;
  border-bottom: 1px solid #c8c8c8;
  white-space: nowrap;
}

.host td {
  background: #c8f0c8;
}

.with-icon {
  display: flex;
  align-items: center;
  gap: 3px;
}

.hbar {
  display: flex;
  height: 17px;
  background: #f0f0f0;
}

.htrack {
  flex: 1;
}

.hthumb {
  width: 26%;
  height: 15px;
  background: #cdcdcd;
}

/* Status bar */
.status {
  display: flex;
  height: 21px;
  border-bottom: 1px solid #6d98cf;
  color: #102868;
  line-height: 22px;
}

.ready {
  flex: 447 1 0;
  padding-left: 2px;
  border-right: 1px solid #6088c0;
  background: linear-gradient(#e0ecfc, #c4dbf9 40%, #b4d0f6 45%, #dcecff);
}

.summary {
  display: flex;
  flex: 716 1 0;
  align-items: center;
  gap: 10px;
  padding-left: 6px;
  background: linear-gradient(#bcd8f8, #8cb0e4 45%, #7ca0d4 50%, #88a8d4);
}

.summary input {
  box-sizing: border-box;
  flex: 1;
  min-width: 0;
  height: 15px;
  padding: 0 2px;
  border: 0;
  background: #fff;
}

.grip {
  width: 11px;
  height: 11px;
  align-self: flex-end;
}
</style>
